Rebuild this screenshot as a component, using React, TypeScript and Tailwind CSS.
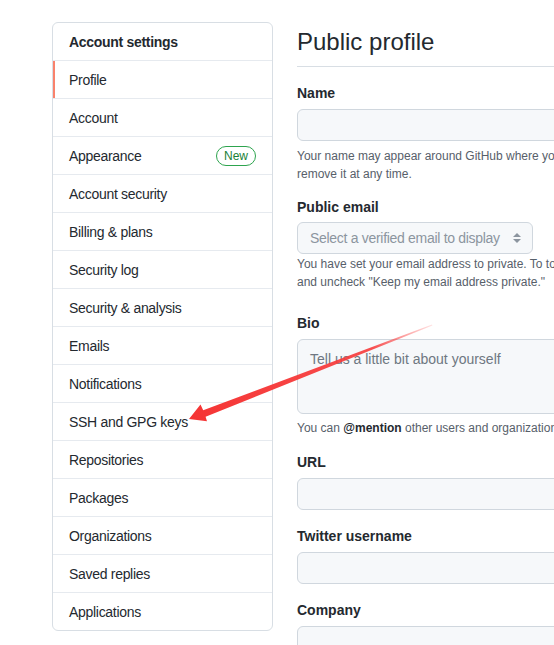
import { ReactNode } from 'react';

const items = [
  'Profile',
  'Account',
  'Appearance',
  'Account security',
  'Billing & plans',
  'Security log',
  'Security & analysis',
  'Emails',
  'Notifications',
  'SSH and GPG keys',
  'Repositories',
  'Packages',
  'Organizations',
  'Saved replies',
  'Applications',
];

function SideNav() {
  return (
    <nav className="w-[221px] shrink-0 self-start rounded-md border border-[#d8dee4] bg-white tracking-[-0.3px]">
      <div className="h-[37px] flex items-center px-4 text-sm font-semibold text-[#24292f]">
        Account settings
      </div>
      {items.map((item) => (
        <div
          key={item}
          className="relative h-[38px] border-t border-[#e6eaef] flex items-center justify-between px-4 text-sm text-[#24292f]"
        >
          {item === 'Profile' && (
            <span className="absolute left-0 top-0 bottom-0 w-[2px] bg-[#f9826c]" />
          )}
          <span>{item}</span>
          {item === 'Appearance' && (
            <span className="h-5 px-[7px] rounded-full border border-[#2da44e] text-xs font-medium tracking-normal text-[#1a7f37] flex items-center">
              New
            </span>
          )}
        </div>
      ))}
    </nav>
  );
}

function Label({ children, className = '' }: { children: ReactNode; className?: string }) {
  return (
    <div className={`h-5 leading-5 text-sm font-semibold text-[#24292f] ${className}`}>{children}</div>
  );
}

function Input({ className = '' }: { className?: string }) {
  return <div className={`h-8 rounded-md border border-[#d0d7de] bg-[#f6f8fa] ${className}`} />;
}

function Note({ lines, className = '' }: { lines: ReactNode[]; className?: string }) {
  return (
    <div className={`text-xs leading-[18px] text-[#57606a] whitespace-nowrap ${className}`}>
      {lines.map((l, i) => (
        <div key={i}>{l}</div>
      ))}
    </div>
  );
}

function Arrow() {
  return (
    <svg className="absolute left-0 top-0 pointer-events-none" width="554" height="645" viewBox="0 0 554 645">
      <defs>
        <linearGradient id="arrowFade" gradientUnits="userSpaceOnUse" x1="433" y1="325" x2="190" y2="419">
          <stop offset="0" stopColor="#ff4d4d" stopOpacity="0.15" />
          <stop offset="0.25" stopColor="#f73b3b" stopOpacity="0.9" />
          <stop offset="1" stopColor="#f53434" stopOpacity="1" />
        </linearGradient>
      </defs>
      <polygon
        points="189,419 200.5,404.5 203.2,410.2 432,324.4 432.4,325.6 205.6,416.8 207,421.2"
        fill="url(#arrowFade)"
      />
    </svg>
  );
}

export default function App() {
  return (
    <div
      className="relative w-[554px] h-[645px] overflow-hidden bg-white text-[#24292f]"
      style={{ fontFamily: '"Segoe UI", "Liberation Sans", Arial, sans-serif' }}
    >
      <div className="flex gap-6 pl-[52px] pt-[22px]">
        <SideNav />
        <main className="w-[560px] shrink-0">
          <h1 className="text-[24px] leading-9 font-normal pt-[2px] pb-[6px] border-b border-[#d8dee4]">
            Public profile
          </h1>

          <Label className="mt-4">Name</Label>
          <Input className="mt-1.5" />
          <Note
            className="mt-1.5"
            lines={[
              'Your name may appear around GitHub where you contribute or are mentioned. You can',
              'remove it at any time.',
            ]}
          />

          <Label className="mt-[14px]">Public email</Label>
          <div className="mt-[5px] w-[236px] h-8 rounded-md border border-[#d0d7de] bg-[#f6f8fa] flex items-center justify-between pl-3 pr-[11px]">
            <span className="text-sm tracking-[-0.3px] text-[#8c959f]">Select a verified email to display</span>
            <svg width="8" height="12" viewBox="0 0 8 12">
              <polygon points="4,1 8,5 0,5" fill="#8c959f" />
              <polygon points="0,7 8,7 4,11" fill="#8c959f" />
            </svg>
          </div>
          <Note
            className="mt-px"
            lines={[
              'You have set your email address to private. To toggle email privacy, go to email settings',
              'and uncheck "Keep my email address private."',
            ]}
          />

          <Label className="mt-[22px]">Bio</Label>
          <div className="mt-1.5 h-[75px] rounded-md border border-[#d0d7de] bg-[#f6f8fa] px-3 pt-[9px] text-sm text-[#6e7781]">
            Tell us a little bit about yourself
          </div>
          <Note
            className="mt-[5px]"
            lines={[
              <>
                You can <span className="font-semibold text-[#24292f]">@mention</span> other users and
                organizations to link to them.
              </>,
            ]}
          />

          <Label className="mt-[15px]">URL</Label>
          <Input className="mt-1.5" />

          <Label className="mt-4">Twitter username</Label>
          <Input className="mt-1.5" />

          <Label className="mt-4">Company</Label>
          <Input className="mt-1.5" />
        </main>
      </div>
      <Arrow />
    </div>
  );
}
